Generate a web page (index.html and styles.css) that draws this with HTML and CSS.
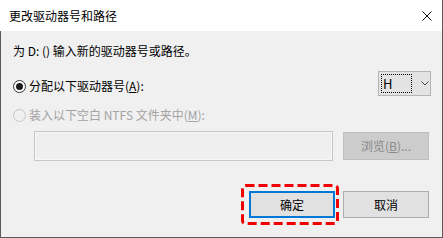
FILE: index.html
```html
<!DOCTYPE html>
<html lang="zh-CN">
<head>
<meta charset="utf-8">
<title>更改驱动器号和路径</title>
<link rel="stylesheet" href="styles.css">
</head>
<body>
<div class="dialog">
  <div class="titlebar">
    <span class="title">更改驱动器号和路径</span>
    <svg class="close" width="10" height="10" viewBox="0 0 10 10"><path d="M0.5 0.5 L9.5 9.5 M9.5 0.5 L0.5 9.5" stroke="#111" stroke-width="1" fill="none"/></svg>
  </div>
  <div class="content">
    <div class="prompt">为 D: () 输入新的驱动器号或路径。</div>
    <div class="row1">
      <div class="option">
        <span class="radio checked"><span class="dot"></span></span>
        <span class="label">分配以下驱动器号(<u>A</u>):</span>
      </div>
      <div class="combo">
        <span class="combo-value">H</span>
        <svg class="chevron" width="8" height="5" viewBox="0 0 8 5"><path d="M0.5 0.5 L4 4 L7.5 0.5" stroke="#444" stroke-width="1" fill="none"/></svg>
      </div>
    </div>
    <div class="option disabled row2">
      <span class="radio"></span>
      <span class="label">装入以下空白 NTFS 文件夹中(<u>M</u>):</span>
    </div>
    <div class="pathrow">
      <div class="field"></div>
      <div class="btn browse">浏览(<u>B</u>)...</div>
    </div>
    <div class="buttons">
      <div class="btn ok">确定
        <svg class="highlight" width="98" height="41" viewBox="0 0 98 41"><rect x="1.5" y="1.5" width="95" height="38" rx="3" ry="3" fill="none" stroke="#f00000" stroke-width="3" stroke-dasharray="9 4"/></svg>
      </div>
      <div class="btn cancel">取消</div>
    </div>
  </div>
</div>
</body>
</html>
```
FILE: styles.css
```css
* { box-sizing: border-box; }
html, body { margin: 0; padding: 0; }
body {
  font-family: "Noto Sans CJK SC", "Noto Sans", sans-serif;
  font-size: 12px;
  color: #000;
  background: #f0f0f0;
}
.dialog {
  width: 443px;
  height: 238px;
  display: flex;
  flex-direction: column;
  border-right: 1px solid #5a5a5a;
}
.titlebar {
  height: 31px;
  background: #fff;
  display: flex;
  align-items: center;
  justify-content: space-between;
  padding: 1px 10px 0 9px;
}
.title {
  font-size: 12px;
  line-height: 14px;
  color: #000;
}
.close { display: block; margin-top: -1px; }
.content {
  flex: 1;
  background: #f0f0f0;
  border-left: 1px solid #5a5a5a;
  border-bottom: 1px solid #5a5a5a;
  padding: 13px 12px 0 12px;
  display: flex;
  flex-direction: column;
}
.prompt {
  line-height: 14px;
  height: 14px;
}
.row1 {
  margin-top: 13px;
  height: 25px;
  display: flex;
  justify-content: space-between;
  align-items: flex-start;
}
.option {
  display: flex;
  align-items: center;
  height: 14px;
  line-height: 14px;
}
.row1 .option { margin-top: 8px; }
.radio {
  width: 13px;
  height: 13px;
  border: 1px solid #333;
  border-radius: 50%;
  background: #fff;
  margin-right: 3px;
  display: flex;
  align-items: center;
  justify-content: center;
}
.dot {
  width: 7px;
  height: 7px;
  border-radius: 50%;
  background: #1a1a1a;
}
.disabled .radio {
  border-color: #c6c6c6;
  background: #f0f0f0;
}
.disabled .label { color: #a3a3a3; }
.row2 { margin-top: 12px; }
.combo {
  width: 53px;
  height: 25px;
  margin-right: -1px;
  border: 1px solid #b4b4b4;
  background: #e3e3e3;
  display: flex;
  align-items: center;
  padding: 0 0 0 2px;
}
.combo-value {
  width: 31px;
  height: 19px;
  border: 1px dotted #000;
  font-size: 13px;
  line-height: 17px;
  padding-left: 1px;
  color: #000;
}
.chevron { margin-left: 9px; display: block; }
.pathrow {
  margin-top: 9px;
  padding-left: 21px;
  display: flex;
  align-items: center;
}
.field {
  width: 299px;
  height: 30px;
  border: 1px solid #c6c6c6;
  box-shadow: inset 0 0 0 1px #f7f7f7;
  background: #efefef;
}
.btn {
  display: flex;
  align-items: center;
  justify-content: center;
  line-height: 14px;
}
.browse {
  margin-left: 10px;
  width: 86px;
  height: 28px;
  background: #cccccc;
  border: 1px solid #bfbfbf;
  color: #8a8a8a;
}
.buttons {
  margin-top: 30px;
  display: flex;
  justify-content: flex-end;
  gap: 8px;
  padding-right: 1px;
}
.ok {
  position: relative;
  width: 86px;
  height: 27px;
  background: #e1e1e1;
  border: 2px solid #0078d7;
}
.highlight {
  position: absolute;
  left: -10px;
  top: -9px;
}
.cancel {
  width: 86px;
  height: 27px;
  background: #e1e1e1;
  border: 1px solid #adadad;
}
```
